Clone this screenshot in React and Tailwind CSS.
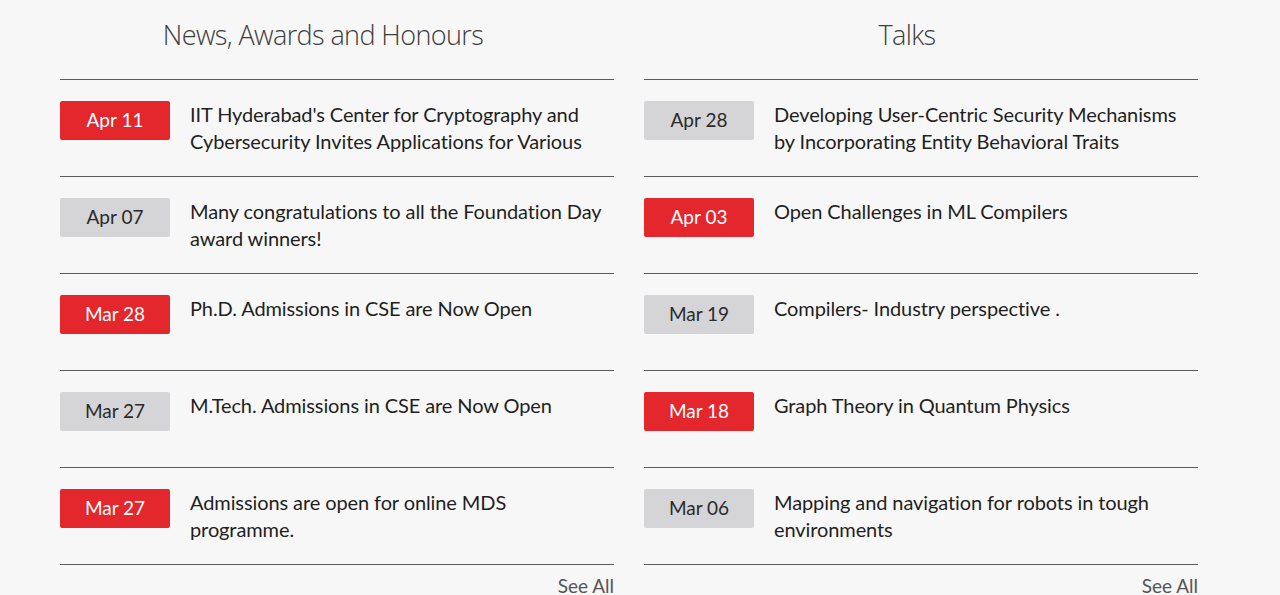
import React from 'react';

const news = [
  { date: 'Apr 11', hot: true, title: "IIT Hyderabad's Center for Cryptography and Cybersecurity Invites Applications for Various" },
  { date: 'Apr 07', hot: false, title: 'Many congratulations to all the Foundation Day award winners!' },
  { date: 'Mar 28', hot: true, title: 'Ph.D. Admissions in CSE are Now Open' },
  { date: 'Mar 27', hot: false, title: 'M.Tech. Admissions in CSE are Now Open' },
  { date: 'Mar 27', hot: true, title: 'Admissions are open for online MDS programme.' },
];

const talks = [
  { date: 'Apr 28', hot: false, title: 'Developing User-Centric Security Mechanisms by Incorporating Entity Behavioral Traits' },
  { date: 'Apr 03', hot: true, title: 'Open Challenges in ML Compilers' },
  { date: 'Mar 19', hot: false, title: 'Compilers- Industry perspective .' },
  { date: 'Mar 18', hot: true, title: 'Graph Theory in Quantum Physics' },
  { date: 'Mar 06', hot: false, title: 'Mapping and navigation for robots in tough environments' },
];

function Column({ heading, items }) {
  return (
    <section className="w-[554px] flex flex-col">
      {/* heading sits a little left of the column centre */}
      <h2 className="h-[79px] pt-[15px] pr-[28px] text-center text-[27px] font-light text-[#3d3d3d] tracking-[-0.6px] font-['Open_Sans',sans-serif]">
        {heading}
      </h2>
      <ul className="border-t border-[#5a5a5a]">
        {items.map((item, i) => (
          <li key={i} className="h-[97px] border-b border-[#5a5a5a] flex items-start gap-5 pt-[21px]">
            <span
              className={`w-[110px] h-[39px] shrink-0 rounded-[2px] flex items-center justify-center text-[19px] ${
                item.hot ? 'bg-[#e4262d] text-white' : 'bg-[#d5d5d7] text-[#2a2a2a]'
              }`}
            >
              {item.date}
            </span>
            <p className="text-[20px] leading-[27px] text-[#1f1f1f] tracking-[-0.1px]">
              {item.title}
            </p>
          </li>
        ))}
      </ul>
      <a href="#" className="self-end mt-[9px] text-[19px] leading-[24px] text-[#555]">
        See All
      </a>
    </section>
  );
}

export default function App() {
  return (
    <div className="min-h-[595px] bg-[#f7f7f7] font-['Lato',sans-serif] overflow-hidden">
      <div className="flex gap-[30px] pl-[60px]">
        <Column heading="News, Awards and Honours" items={news} />
        <Column heading="Talks" items={talks} />
      </div>
    </div>
  );
}
